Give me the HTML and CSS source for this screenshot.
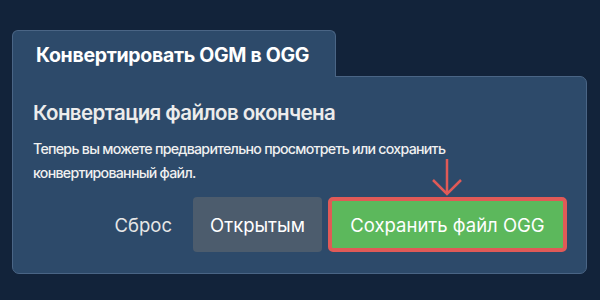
FILE: index.html
```html
<!DOCTYPE html>
<html lang="ru">
<head>
    <meta charset="UTF-8">
    <title>Конвертировать OGM в OGG</title>
    <link rel="stylesheet" href="styles.css">
</head>
<body>
    <div class="converter">
        <div class="tab">Конвертировать OGM в OGG</div>

        <div class="panel">
            <h2>Конвертация файлов окончена</h2>
            <p>Теперь вы можете предварительно просмотреть или сохранить конвертированный файл.</p>

            <div class="actions">
                <button class="reset">Сброс</button>
                <button class="open">Открытым</button>
                <div class="save-wrap">
                    <!-- pointer arrow above the save button -->
                    <svg class="arrow" width="32" height="38" viewBox="0 0 32 38">
                        <path d="M16 1 V36 M2 22 L16 36 L30 22" fill="none" stroke="#e05a57" stroke-width="2.5"/>
                    </svg>
                    <button class="save">Сохранить файл OGG</button>
                </div>
            </div>
        </div>
    </div>
</body>
</html>
```

FILE: styles.css
```css
body {
    margin: 0;
    background: #12233a;
    font-family: Inter, "Noto Sans", sans-serif;
    color: #fff;
}

.converter {
    padding: 30px 13px 0 12px;
}

.tab {
    display: inline-block;
    box-sizing: border-box;
    width: 324px;
    height: 47px;
    padding: 12px 0 0 23px;
    background: #2d4a6a;
    border: 1px solid #4a6585;
    border-bottom: none;
    border-radius: 6px 6px 0 0;
    font-size: 19.5px;
    font-weight: 700;
    letter-spacing: -0.3px;
    position: relative;
    z-index: 1;
    margin-bottom: -1px;
}

.panel {
    box-sizing: border-box;
    height: 198px;
    background: #2d4a6a;
    border: 1px solid #4a6585;
    border-radius: 0 7px 7px 7px;
    padding: 23px 19px 0 20px;
}

.panel h2 {
    margin: 0;
    font-size: 20.5px;
    font-weight: 600;
    color: #ececec;
    letter-spacing: -0.6px;
}

.panel p {
    margin: 12px 0 0;
    font-size: 14.2px;
    font-weight: 500;
    line-height: 24px;
    color: #f0f0f0;
    letter-spacing: -0.73px;
}

.actions {
    display: flex;
    justify-content: flex-end;
    align-items: center;
    gap: 6px;
    margin-top: 12px;
}

button {
    font-family: inherit;
    font-size: 18.5px;
    color: #fff;
    border: none;
    height: 55px;
    border-radius: 4px;
    cursor: pointer;
}

.reset {
    background: none;
    color: #e6e6e6;
    padding: 0 15px 0 0;
}

.open {
    background: #4c5c6d;
    width: 129px;
}

.save-wrap {
    position: relative;
}

.arrow {
    position: absolute;
    left: 103px;
    top: -39px;
}

.save {
    background: #5cb85c;
    width: 239px;
    border: 4px solid #e05a57;
    border-radius: 5px;
}
```
